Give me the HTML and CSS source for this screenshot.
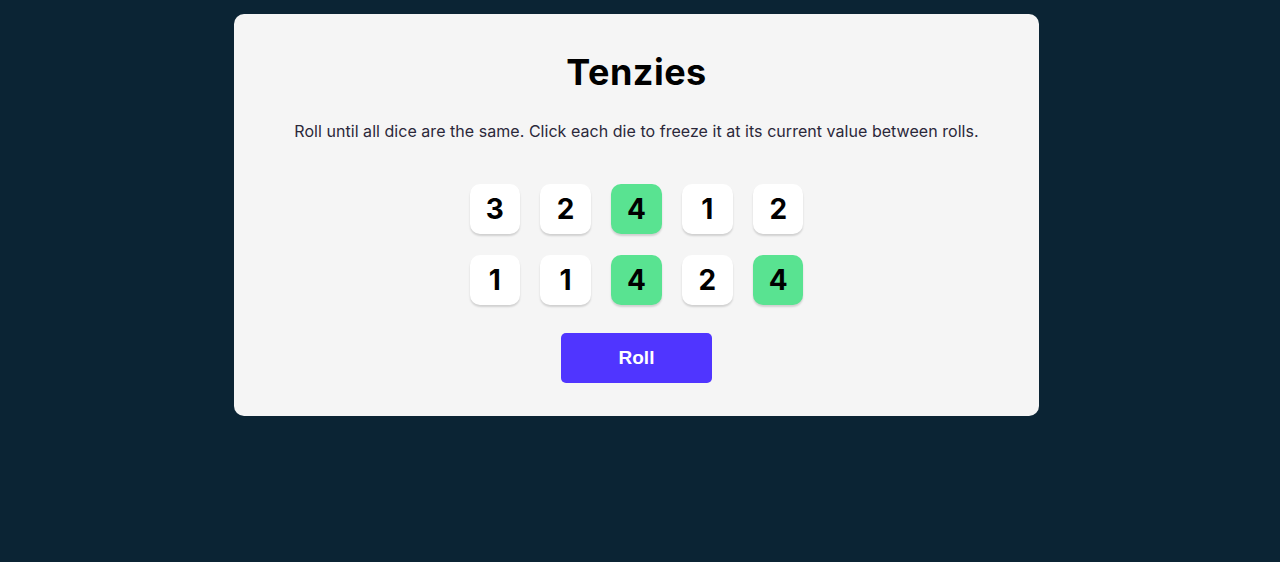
FILE: index.html
```html
<!DOCTYPE html>
<html lang="en">
<head>
<meta charset="utf-8">
<title>Tenzies</title>
<link rel="stylesheet" href="styles.css">
</head>
<body>
<div class="page">
  <main class="card">
    <h1 class="title">Tenzies</h1>
    <p class="instructions">Roll until all dice are the same. Click each die to freeze it at its current value between rolls.</p>
    <div class="dice">
      <button class="die">3</button>
      <button class="die">2</button>
      <button class="die held">4</button>
      <button class="die">1</button>
      <button class="die">2</button>
      <button class="die">1</button>
      <button class="die">1</button>
      <button class="die held">4</button>
      <button class="die">2</button>
      <button class="die held">4</button>
    </div>
    <button class="roll">Roll</button>
  </main>
</div>
</body>
</html>
```

FILE: styles.css
```css
html, body {
  margin: 0;
  padding: 0;
  background: #0b2434;
  height: 100%;
}
.page {
  display: flex;
  justify-content: center;
  padding: 14px 7px 0 0;
}
.card {
  width: 805px;
  height: 402px;
  box-sizing: border-box;
  background: #f5f5f5;
  border-radius: 10px;
  display: flex;
  flex-direction: column;
  align-items: center;
  padding-top: 34px;
}
.title {
  margin: 0;
  font-family: Inter, "Noto Sans", sans-serif;
  font-size: 36px;
  font-weight: 700;
  letter-spacing: 0.5px;
  line-height: 48px;
  color: #000;
}
.instructions {
  margin: 24px 0 0;
  font-family: Inter, "Noto Sans", sans-serif;
  font-size: 16px;
  letter-spacing: 0.04px;
  line-height: 22px;
  color: #2b283a;
  text-align: center;
}
.dice {
  margin-top: 42px;
  display: grid;
  grid-template-columns: repeat(5, 50.4px);
  grid-auto-rows: 50.4px;
  gap: 20.5px;
}
.die {
  border: none;
  padding: 0;
  background: #fff;
  border-radius: 10px;
  box-shadow: 0 2px 2px rgba(0, 0, 0, 0.15);
  font-family: Inter, "Noto Sans", sans-serif;
  font-size: 28px;
  font-weight: 700;
  color: #000;
  display: flex;
  align-items: center;
  justify-content: center;
}
.die.held {
  background: #59e391;
}
.roll {
  margin-top: 28px;
  width: 151px;
  height: 50px;
  border: none;
  border-radius: 5px;
  background: #5035ff;
  color: #fff;
  font-family: "Liberation Sans", Arial, sans-serif;
  font-size: 19px;
  font-weight: 700;
}
```
